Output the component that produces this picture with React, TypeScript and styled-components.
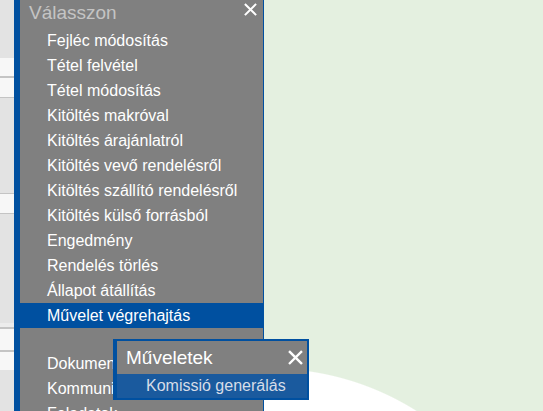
import styled, { createGlobalStyle } from "styled-components";

const GlobalStyle = createGlobalStyle`
  html, body {
    margin: 0;
    padding: 0;
    background: #e4f0e0;
    font-family: "Liberation Sans", Arial, sans-serif;
  }
`;

const Page = styled.div`
  position: relative;
  display: flex;
  width: 543px;
  height: 411px;
  overflow: hidden;
`;

const Strip = styled.div`
  width: 14px;
  display: flex;
  flex-direction: column;
  background: #e3e3e3;
`;

const StripRow = styled.div<{ $h: number; $kind: "gap" | "field" | "line" | "soft" }>`
  height: ${(p) => p.$h}px;
  flex: none;
  background: ${(p) =>
    p.$kind === "field"
      ? "#f7f7f7"
      : p.$kind === "line"
      ? "#c4c4c4"
      : p.$kind === "soft"
      ? "#ececec"
      : "#e3e3e3"};
`;

const Menu = styled.div`
  width: 243px;
  display: flex;
  flex-direction: column;
  border-left: 6px solid #0050a0;
  border-right: 1px solid #0050a0;
  background: #808080;
`;

const Panel = styled.div<{ $top?: number; $bottom?: number }>`
  display: flex;
  flex-direction: column;
  padding-top: ${(p) => p.$top ?? 0}px;
  padding-bottom: ${(p) => p.$bottom ?? 0}px;
`;

const Divider = styled.div`
  height: 2px;
  background: #0050a0;
`;

const TitleRow = styled.div`
  display: flex;
  justify-content: space-between;
  align-items: flex-start;
  height: 28px;
  padding: 0 6px 0 9px;
`;

const Title = styled.span`
  font-size: 19px;
  line-height: 25px;
  color: #c4c4c4;
`;

const CloseIcon = styled.svg<{ $top?: number }>`
  flex: none;
  margin-top: ${(p) => p.$top ?? 0}px;
  stroke: #fff;
  stroke-width: 1.9;
  stroke-linecap: square;
  fill: none;
`;

const Item = styled.div<{ $active?: boolean }>`
  height: 25px;
  line-height: 25px;
  padding-left: 27px;
  font-size: 16px;
  color: #fff;
  white-space: nowrap;
  background: ${(p) => (p.$active ? "#0050a0" : "transparent")};
`;

const Canvas = styled.div`
  flex: 1;
  background: radial-gradient(circle 275px at 6px 643px, #ffffff 99.6%, #e4f0e0 100%);
`;

const Popup = styled.div`
  position: absolute;
  left: 113px;
  top: 339px;
  width: 190px;
  border: 2px solid #0050a0;
  border-left-width: 4px;
  background: #1a5a9e;
  display: flex;
  flex-direction: column;
`;

const PopupHead = styled.div`
  display: flex;
  justify-content: space-between;
  align-items: center;
  height: 33px;
  padding: 0 4px 0 9px;
  background: #808080;
`;

const PopupTitle = styled.span`
  font-size: 19px;
  line-height: 33px;
  color: #fff;
`;

const PopupItem = styled.div`
  height: 24px;
  line-height: 24px;
  padding-left: 29px;
  font-size: 16px;
  color: #d6dde8;
  white-space: nowrap;
`;

const stripRows: { h: number; kind: "gap" | "field" | "line" | "soft" }[] = [
  { h: 58, kind: "gap" },
  { h: 18, kind: "field" },
  { h: 2, kind: "line" },
  { h: 19, kind: "field" },
  { h: 1, kind: "line" },
  { h: 95, kind: "gap" },
  { h: 1, kind: "line" },
  { h: 19, kind: "field" },
  { h: 1, kind: "line" },
  { h: 109, kind: "gap" },
  { h: 4, kind: "soft" },
  { h: 2, kind: "line" },
  { h: 21, kind: "field" },
  { h: 2, kind: "line" },
  { h: 18, kind: "field" },
  { h: 41, kind: "gap" },
];

const mainItems = [
  "Fejléc módosítás",
  "Tétel felvétel",
  "Tétel módosítás",
  "Kitöltés makróval",
  "Kitöltés árajánlatról",
  "Kitöltés vevő rendelésről",
  "Kitöltés szállító rendelésről",
  "Kitöltés külső forrásból",
  "Engedmény",
  "Rendelés törlés",
  "Állapot átállítás",
  "Művelet végrehajtás",
];

const otherItems = ["Dokumentumok", "Kommunikáció", "Feladatok"];

function Close({ size, top }: { size: number; top?: number }) {
  return (
    <CloseIcon $top={top} width={size} height={size} viewBox="0 0 12 12" aria-hidden>
      <path d="M1.5 1.5l9 9M10.5 1.5l-9 9" />
    </CloseIcon>
  );
}

export default function App() {
  return (
    <>
      <GlobalStyle />
      <Page>
        <Strip>
          {stripRows.map((r, i) => (
            <StripRow key={i} $h={r.h} $kind={r.kind} />
          ))}
        </Strip>

        <Menu>
          <Panel $bottom={11}>
            <TitleRow>
              <Title>Válasszon</Title>
              <Close size={13} top={3} />
            </TitleRow>
            {mainItems.map((label) => (
              <Item key={label} $active={label === "Művelet végrehajtás"}>
                {label}
              </Item>
            ))}
          </Panel>
          <Divider />
          <Panel $top={12}>
            {otherItems.map((label) => (
              <Item key={label}>{label}</Item>
            ))}
          </Panel>
        </Menu>

        <Canvas />

        <Popup>
          <PopupHead>
            <PopupTitle>Műveletek</PopupTitle>
            <Close size={15} />
          </PopupHead>
          <PopupItem>Komissió generálás</PopupItem>
        </Popup>
      </Page>
    </>
  );
}
